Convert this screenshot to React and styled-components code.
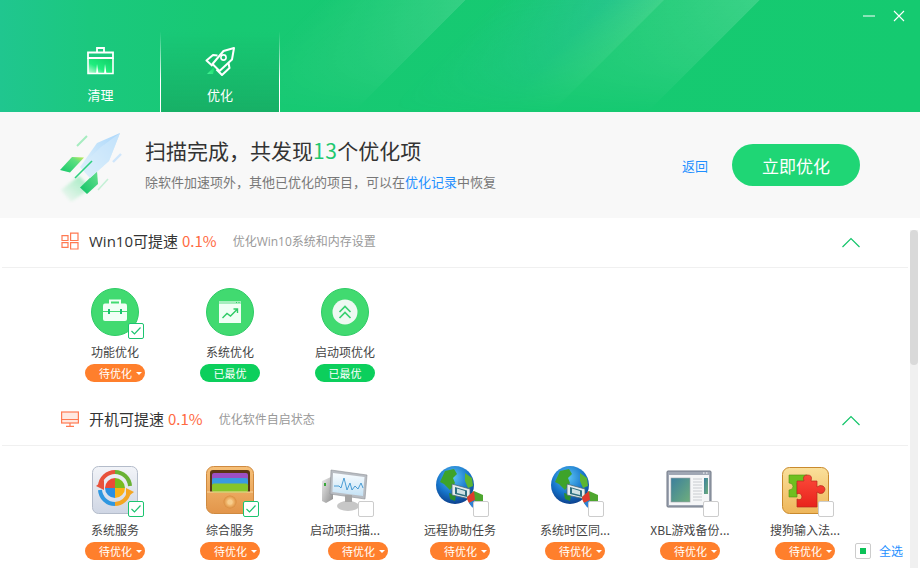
import React from 'react'
import styled, { createGlobalStyle } from 'styled-components'

const GlobalStyle = createGlobalStyle`
  html, body {
    margin: 0;
    padding: 0;
    background: #fff;
  }
  body {
    font-family: "Noto Sans CJK SC", "Noto Sans", sans-serif;
    color: #333;
  }
`

const Page = styled.div`
  width: 920px;
  height: 580px;
  overflow: hidden;
  background: #fff;
`

const Header = styled.header`
  position: relative;
  height: 112px;
  display: flex;
  flex-direction: column;
  background: linear-gradient(90deg, #20c68f 0, #1bc87e 90px, #17c973 220px, #15ca70 100%);

  &::before {
    content: '';
    position: absolute;
    inset: 0;
    background:
      linear-gradient(135deg, transparent 225px, rgba(255, 255, 255, 0.13) 329px, transparent 329.5px),
      linear-gradient(135deg, transparent 350px, rgba(70, 190, 190, 0.32) 430px, rgba(255, 255, 255, 0.18) 469px, rgba(255, 255, 255, 0.09) 470px, rgba(255, 255, 255, 0.16) 537px, transparent 537.5px);
    mask-image: linear-gradient(180deg, #000 0, rgba(0, 0, 0, 0.5) 60%, transparent 100%);
  }
`

const TitleBar = styled.div`
  position: relative;
  height: 32px;
  box-sizing: border-box;
  padding: 10px 15px 0 0;
  display: flex;
  justify-content: flex-end;
  gap: 18px;
`

const TabBar = styled.nav`
  position: relative;
  flex: 1;
  display: flex;
  padding-left: 41px;
`

const Tab = styled.div`
  width: 119px;
  box-sizing: border-box;
  padding-top: 14px;
  border-right: 1px solid;
  border-image: linear-gradient(180deg, rgba(255, 255, 255, 0), #fff 60%) 1;
  display: flex;
  flex-direction: column;
  align-items: center;
  color: #fff;
  background: ${p => (p.$active ? 'linear-gradient(180deg, rgba(23, 178, 102, 0) 0, #17b066 100%)' : 'none')};

  &:first-child {
    width: 120px;
  }
`

const TabLabel = styled.span`
  margin-top: 11px;
  font-size: 13px;
  line-height: 16px;
`

const Summary = styled.section`
  height: 106px;
  box-sizing: border-box;
  padding: 0 60px 0 55px;
  display: flex;
  align-items: center;
  background: #f8f8f8;
`

const SummaryText = styled.div`
  margin-left: 15px;
  margin-top: -3px;
`

const SummaryTitle = styled.h1`
  margin: 0;
  font-size: 21px;
  font-weight: 400;
  line-height: 28px;
  color: #333;
`

const Count = styled.span`
  color: #1fc870;
  letter-spacing: 0.5px;
`

const SummaryNote = styled.p`
  margin: 9px 0 0;
  font-size: 13px;
  line-height: 18px;
  color: #777;
`

const Link = styled.a`
  color: #1e8fff;
  font-size: ${p => p.$size || 13}px;
`

const BackLink = styled(Link)`
  margin-left: auto;
`

const PrimaryButton = styled.button`
  width: 128px;
  height: 42px;
  margin-left: 24px;
  border: 0;
  border-radius: 21px;
  background: #1fd675;
  color: #fff;
  font-family: inherit;
  font-size: 17px;
`

const Body = styled.div`
  position: relative;
  height: 350px;
  display: flex;
  overflow: hidden;
`

const Sections = styled.div`
  width: 908px;
  padding-left: 2px;
  box-sizing: border-box;
`

const SectionHead = styled.div`
  height: 50px;
  box-sizing: border-box;
  padding: 0 48px 3px 59px;
  display: flex;
  align-items: center;
  border-bottom: 1px solid #f0f0f0;
`

const SectionTitle = styled.h2`
  margin: -1px 0 0 10px;
  font-family: "Open Sans", "Noto Sans CJK SC", sans-serif;
  font-size: 15px;
  font-weight: 400;
  color: #333;
`

const Percent = styled.span`
  margin: -1px 0 0 4px;
  font-size: 15px;
  color: #ff6a42;
`

const SectionNote = styled.span`
  margin: -1px 0 0 16px;
  font-family: "Open Sans", "Noto Sans CJK SC", sans-serif;
  font-size: 12px;
  color: #999;
`

const Collapse = styled.svg`
  margin: 2px 0 0 auto;
`

const ItemRow = styled.div`
  display: flex;
  gap: 1px;
  padding: 20px 0 14px 56px;
`

const Item = styled.div`
  width: 114px;
  display: flex;
  flex-direction: column;
  align-items: center;
`

const IconWrap = styled.div`
  position: relative;
  width: 48px;
  height: 48px;

  svg {
    display: block;
  }
`

const Check = styled.span`
  position: absolute;
  right: -5px;
  bottom: -3px;
  width: 16px;
  height: 16px;
  box-sizing: border-box;
  border: 1px solid ${p => (p.$on ? '#1bc46f' : '#ccc')};
  border-radius: 2px;
  background: #fff;
  display: flex;
  align-items: center;
  justify-content: center;
`

const ItemLabel = styled.div`
  margin-top: 8px;
  max-width: 112px;
  white-space: nowrap;
  font-size: 12px;
  line-height: 16px;
  color: #444;
`

const Badge = styled.div`
  width: 60px;
  height: 18px;
  margin-top: 4px;
  margin-left: ${p => p.$nudge || 0}px;
  box-sizing: border-box;
  padding-left: ${p => (p.$done ? 0 : 14)}px;
  border-radius: 9px;
  display: flex;
  align-items: center;
  justify-content: ${p => (p.$done ? 'center' : 'flex-start')};
  background: ${p => (p.$done ? '#0ccf5c' : '#ff7f2c')};
  color: #fff;
  font-size: 11px;
  line-height: 18px;
`

const Caret = styled.i`
  margin-left: 4px;
  border-top: 3px solid #fff;
  border-left: 3px solid transparent;
  border-right: 3px solid transparent;
`

const Track = styled.div`
  width: 8px;
  height: 338px;
  margin: 12px 2px 0;
  background: #f0f0f0;
`

const Thumb = styled.div`
  height: 135px;
  border-radius: 4px;
  background: #d9d9d9;
`

const SelectAll = styled.div`
  position: absolute;
  right: 17px;
  bottom: 9px;
  display: flex;
  align-items: center;
  gap: 8px;
`

const SelectBox = styled.span`
  width: 16px;
  height: 16px;
  box-sizing: border-box;
  border: 1px solid #ccc;
  border-radius: 2px;
  background: #fff;
  display: flex;
  align-items: center;
  justify-content: center;

  &::after {
    content: '';
    width: 6px;
    height: 6px;
    background: #0cc258;
  }
`

const Tick = () => (
  <svg width="12" height="10" viewBox="0 0 12 10" fill="none">
    <path d="M1.5 5 L4.5 8 L10.5 1.5" stroke="#1bc46f" strokeWidth="1.2" />
  </svg>
)

const BroomIcon = () => (
  <svg width="29" height="30" viewBox="0 0 29 30" fill="none">
    <defs>
      <linearGradient id="broomFill" x1="0.9" y1="0" x2="0" y2="1">
        <stop offset="0" stopColor="#10cf68" />
        <stop offset="0.6" stopColor="#1fee7e" />
        <stop offset="1" stopColor="#c8fbdc" />
      </linearGradient>
    </defs>
    <path d="M2 12 H27 V27 H2 Z" fill="url(#broomFill)" />
    <path d="M11 6.5 V2 H18 V6.5 M2 6.5 H27 V12 H2 Z" stroke="#fff" strokeWidth="1.8" />
    <path d="M2 12 V27.5 H27 V12" stroke="#fff" strokeWidth="1.6" />
    <path d="M10 28 L11 18 L12.5 28 Z M18 28 L19 18 L20.5 28 Z" fill="#fff" />
  </svg>
)

const RocketIcon = () => (
  <svg width="30" height="30" viewBox="0 0 30 30" fill="none">
    <defs>
      <linearGradient id="flame" x1="1" y1="0" x2="0" y2="1">
        <stop offset="0" stopColor="#06d85c" />
        <stop offset="1" stopColor="#48f196" />
      </linearGradient>
    </defs>
    <path d="M2 28 L10 20 L8 28 Z" fill="url(#flame)" />
    <path d="M29 2 L27 13.5 L14.5 25 L7.5 18 L18.5 5 Z" stroke="#fff" strokeWidth="2" strokeLinejoin="round" />
    <path d="M12.5 9.5 L8 9 L1.5 14.5 L7.5 20 M23.5 17 L24.5 22 L17 29 L11.5 23.5" stroke="#fff" strokeWidth="2" strokeLinejoin="round" />
    <circle cx="18.5" cy="11.5" r="2.6" stroke="#fff" strokeWidth="1.6" />
  </svg>
)

const Minimize = () => (
  <svg width="12" height="12" viewBox="0 0 12 12">
    <path d="M0 6 H12" stroke="#fff" strokeWidth="1" />
  </svg>
)

const CloseIcon = () => (
  <svg width="12" height="12" viewBox="0 0 12 12">
    <path d="M1 1 L11 11 M11 1 L1 11" stroke="#fff" strokeWidth="1.1" />
  </svg>
)

const BigRocket = () => (
  <svg width="75" height="75" viewBox="0 0 75 75" fill="none">
    <defs>
      <linearGradient id="body" x1="1" y1="0" x2="0" y2="1">
        <stop offset="0" stopColor="#a9d6fb" />
        <stop offset="1" stopColor="#e6f4fb" />
      </linearGradient>
      <linearGradient id="finA" x1="0" y1="1" x2="1" y2="0">
        <stop offset="0" stopColor="#14c76a" />
        <stop offset="0.7" stopColor="#5fe07f" />
        <stop offset="1" stopColor="#c5ea55" />
      </linearGradient>
      <linearGradient id="finB" x1="0" y1="1" x2="1" y2="0">
        <stop offset="0" stopColor="#0fc266" />
        <stop offset="1" stopColor="#68e08e" />
      </linearGradient>
      <linearGradient id="trail" x1="1" y1="0" x2="0" y2="1">
        <stop offset="0" stopColor="#6fe3a0" stopOpacity="0.7" />
        <stop offset="1" stopColor="#6fe3a0" stopOpacity="0" />
      </linearGradient>
      <filter id="soft">
        <feGaussianBlur stdDeviation="1.8" />
      </filter>
    </defs>
    <path d="M24 48 L36 60 L16 74 L6 62 Z" fill="url(#trail)" filter="url(#soft)" />
    <path d="M5 42 L17 29 L29 29.5 L15 44.5 Z" fill="url(#finA)" />
    <path d="M25 59.5 L42 43 L43 56 L32 66 Z" fill="url(#finB)" />
    <path d="M65 5 L42 15 L25 39 L35 50 L54 33 Z" fill="url(#body)" />
    <path d="M65 5 L46 19 L25 39 L35 50 L54 33 Z" fill="#d5ebfb" opacity="0.55" />
    <path d="M20 50 L37 33" stroke="#2ed07f" strokeWidth="1.6" />
    <path d="M22 18 L32 8" stroke="#a6ecc0" strokeWidth="2" />
    <path d="M43 62 L53 51" stroke="#c5f0d6" strokeWidth="1.6" />
    <path d="M58 34 L66 26" stroke="#cfe6fb" strokeWidth="2.4" />
  </svg>
)

const WinOutline = () => (
  <svg width="18" height="18" viewBox="0 0 18 18" fill="none" stroke="#ff7a52" strokeWidth="1.2">
    <path d="M1 3.6 H7 V8.5 H1 Z M9.6 1.2 H17 V8.5 H9.6 Z M1 10.6 H7 V15.4 H1 Z M9.6 10.6 H17 V17 H9.6 Z" />
  </svg>
)

const MonitorOutline = () => (
  <svg width="18" height="18" viewBox="0 0 18 18" fill="none" stroke="#ff7a52" strokeWidth="1.2">
    <rect x="0.6" y="2" width="16.8" height="11" fill="#ffe9e1" />
    <path d="M1 9.5 H17 M9 13 V16 M5 16.4 H13" />
  </svg>
)

const UpChevron = () => (
  <Collapse width="18" height="11" viewBox="0 0 18 11" fill="none">
    <path d="M0.5 10 L9 1.5 L17.5 10" stroke="#14c56a" strokeWidth="1.2" />
  </Collapse>
)

const CircleBase = ({ children }) => (
  <svg width="48" height="48" viewBox="0 0 48 48" fill="none">
    <circle cx="24" cy="24" r="23.5" fill="#41da70" stroke="#2fcb66" strokeWidth="1" />
    {children}
  </svg>
)

const ToolboxIcon = () => (
  <CircleBase>
    <path d="M19 16 V12.5 H29 V16" stroke="#f0fff5" strokeWidth="2" />
    <rect x="12" y="15.5" width="24" height="17.5" rx="2" fill="#f0fff5" />
    <path d="M12 23.5 H36" stroke="#41da70" strokeWidth="1" />
    <path d="M18 21 V26 M30 21 V26" stroke="#1bc46f" strokeWidth="2" />
  </CircleBase>
)

const ChartIcon = () => (
  <CircleBase>
    <rect x="13" y="13" width="22" height="22" fill="#f0fff5" />
    <rect x="13" y="13" width="22" height="3" fill="#a6eebe" />
    <path d="M30 14.5 H31 M32.5 14.5 H33.5" stroke="#2fcb66" />
    <path d="M16.5 30 L21 25.5 L24.5 28 L31 21.5 M27.5 21 H31.5 V25" stroke="#2fcb66" strokeWidth="1.4" />
  </CircleBase>
)

const BoostIcon = () => (
  <CircleBase>
    <circle cx="24" cy="24" r="12.5" fill="#eef9f2" />
    <path d="M18.5 24 L24 18.5 L29.5 24 M18.5 30 L24 24.5 L29.5 30" stroke="#37d06f" strokeWidth="1.7" />
  </CircleBase>
)

const ServiceIcon = () => (
  <svg width="48" height="48" viewBox="0 0 48 48" fill="none">
    <defs>
      <linearGradient id="tile" x1="0" y1="0" x2="0" y2="1">
        <stop offset="0" stopColor="#f2f4f8" />
        <stop offset="1" stopColor="#cfd6e4" />
      </linearGradient>
    </defs>
    <rect x="1.5" y="0.5" width="45" height="47" rx="6" fill="url(#tile)" stroke="#b4bcca" />
    <path d="M9 20 A15 15 0 0 1 24 6" stroke="#e8523b" strokeWidth="4" />
    <path d="M24 6 A15 15 0 0 1 39 20" stroke="#69b234" strokeWidth="4" />
    <path d="M9 24 A15 15 0 0 0 24 38" stroke="#2f97e0" strokeWidth="4" />
    <path d="M24 38 A15 15 0 0 0 38 26" stroke="#f4a623" strokeWidth="4" />
    <path d="M5 20 L13 14 V24 Z" fill="#e8523b" />
    <path d="M43 26 L35 32 V22 Z" fill="#f4a623" />
    <path d="M24 22 V12 A10 10 0 0 0 14 22 Z" fill="#ec4a35" />
    <path d="M24 22 V12 A10 10 0 0 1 34 22 Z" fill="#78bb1e" />
    <path d="M24 22 V32 A10 10 0 0 1 14 22 Z" fill="#2a8fe0" />
    <path d="M24 22 V32 A10 10 0 0 0 34 22 Z" fill="#fbb117" />
  </svg>
)

const DrawerIcon = () => (
  <svg width="48" height="48" viewBox="0 0 48 48" fill="none">
    <defs>
      <linearGradient id="chest" x1="0" y1="0" x2="0" y2="1">
        <stop offset="0" stopColor="#f6c078" />
        <stop offset="1" stopColor="#e2954a" />
      </linearGradient>
      <radialGradient id="knob">
        <stop offset="0" stopColor="#fbd79a" />
        <stop offset="0.6" stopColor="#eeb267" />
        <stop offset="1" stopColor="#d98b3d" />
      </radialGradient>
    </defs>
    <rect x="0.5" y="0.5" width="47" height="47" rx="7" fill="url(#chest)" stroke="#cf8a40" />
    <path d="M4 26 V7 Q4 4 7 4 H41 Q44 4 44 7 V26 Z" fill="#5b3514" />
    <rect x="6" y="7" width="36" height="9" rx="2" fill="#9c4fc4" />
    <rect x="6" y="12" width="36" height="8" rx="2" fill="#3a9be0" />
    <rect x="6" y="17.5" width="36" height="9" rx="2" fill="#86c52a" />
    <path d="M1 26 H47" stroke="#f9d79d" strokeWidth="1" />
    <circle cx="24" cy="36" r="6.5" fill="url(#knob)" />
    <circle cx="24" cy="36" r="2.6" fill="#f7cd8c" />
  </svg>
)

const PcIcon = () => (
  <svg width="48" height="48" viewBox="0 0 48 48" fill="none">
    <defs>
      <linearGradient id="case" x1="0" y1="0" x2="1" y2="1">
        <stop offset="0" stopColor="#eee" />
        <stop offset="1" stopColor="#8d8d8d" />
      </linearGradient>
      <linearGradient id="screen" x1="0" y1="0" x2="0" y2="1">
        <stop offset="0" stopColor="#f8fcff" />
        <stop offset="1" stopColor="#c5e2f5" />
      </linearGradient>
    </defs>
    <path d="M1 15 L12 10 V33 L5 37 L1 35 Z" fill="url(#case)" />
    <rect x="3" y="17" width="2" height="3" fill="#3aa83a" />
    <path d="M10 4 L46 9 L44 33 L9 28 Z" fill="#b8bcc2" stroke="#8d9096" strokeWidth="0.6" />
    <path d="M12 7 L43.5 11 L42 30 L11.5 26 Z" fill="url(#screen)" />
    <path d="M13 20 L18 20 L20 22 L23 12 L26 24 L29 17 L31 24 L34 20 L37 23 L40 17 L42 22" stroke="#3a93cf" strokeWidth="0.9" />
    <ellipse cx="27" cy="40" rx="11" ry="5" fill="#c7c7c7" />
    <path d="M24 29 H31 V36 H24 Z" fill="#a5a5a5" />
  </svg>
)

const GlobeIcon = ({ id }) => (
  <svg width="48" height="48" viewBox="0 0 48 48" fill="none">
    <defs>
      <radialGradient id={id} cx="0.45" cy="0.3" r="0.8">
        <stop offset="0" stopColor="#5bc3f5" />
        <stop offset="0.55" stopColor="#1573c9" />
        <stop offset="1" stopColor="#0a2f78" />
      </radialGradient>
    </defs>
    <circle cx="19" cy="19" r="19" fill={`url(#${id})`} />
    <path d="M9 5 L18 3 L21 8 L17 12 L19 17 L14 24 L8 18 L4 16 Z" fill="#3ea32a" />
    <path d="M29 7 L36 12 L37 20 L32 22 L29 15 Z" fill="#5cb531" />
    <path d="M13 27 L20 29 L19 35 L14 33 Z" fill="#2c8f2b" />
    <path d="M16 18 L34 23 V33 L16 29 Z" fill="#e6ecee" stroke="#4d6a74" strokeWidth="0.8" />
    <path d="M19 21 L31 24.5 V31 L19 28 Z" fill="#2f6f80" />
    <path d="M21 22.5 L29 25 V29 L21 27 Z" fill="#cfe0e3" />
    <path d="M31 31 L38 25 L47 29 V36 L39 43 Q32 38 31 31 Z" fill="#4ea62f" />
    <path d="M31 31 L38 25 L39 34 L33 37 Q31 34 31 31 Z" fill="#e03a2e" />
    <path d="M33 37 L39 34 V43 Q35 41 33 37 Z" fill="#2f7fd8" />
  </svg>
)

const WindowIcon = () => (
  <svg width="48" height="48" viewBox="0 0 48 48" fill="none">
    <defs>
      <linearGradient id="pane" x1="0" y1="0" x2="1" y2="1">
        <stop offset="0" stopColor="#3b7f9d" />
        <stop offset="1" stopColor="#6fae7c" />
      </linearGradient>
    </defs>
    <rect x="1" y="5" width="44" height="36" rx="1" fill="#a0a7b4" stroke="#6f7684" />
    <rect x="3" y="9" width="40" height="30" fill="#f5f6f7" />
    <path d="M37 7 H38.5 M40 7 H41.5" stroke="#fff" />
    <rect x="5" y="12" width="19" height="24" fill="url(#pane)" stroke="#99a0a8" strokeWidth="0.6" />
    <path d="M27 13 H36 M27 16 H36 M27 19 H36 M27 22 H36 M27 25 H36 M27 28 H36 M27 31 H36 M27 34 H36" stroke="#c9ccd0" />
    <rect x="38" y="12" width="4" height="16" fill="url(#pane)" />
  </svg>
)

const PuzzleIcon = () => (
  <svg width="48" height="48" viewBox="0 0 48 48" fill="none">
    <defs>
      <linearGradient id="puzzleTile" x1="0" y1="0" x2="0" y2="1">
        <stop offset="0" stopColor="#fae09b" />
        <stop offset="1" stopColor="#eeb65a" />
      </linearGradient>
      <linearGradient id="red" x1="0" y1="0" x2="0" y2="1">
        <stop offset="0" stopColor="#fb4a3a" />
        <stop offset="1" stopColor="#e8231c" />
      </linearGradient>
    </defs>
    <rect x="1.5" y="1.5" width="46" height="46" rx="7" fill="url(#puzzleTile)" stroke="#c98a2e" />
    <path d="M8 9 H26 V17 H16 V31 H8 V24 Q12 24 12 20.5 Q12 17 8 17 Z" fill="#6fbf1f" stroke="#4a9412" strokeWidth="0.6" />
    <path d="M16 15 H23 Q21 9 26.5 9 Q32 9 30 15 H36 V21 Q39 18.5 42 20 Q46 23 42 27 Q39 28.5 36 26 V41 H16 V33 Q20 35 21 31 Q20 26 16 28 Z" fill="url(#red)" stroke="#b8291c" strokeWidth="0.7" />
  </svg>
)

const sections = [
  {
    title: 'Win10可提速',
    note: '优化Win10系统和内存设置',
    icon: <WinOutline />,
    items: [
      { label: '功能优化', icon: <ToolboxIcon />, checked: true },
      { label: '系统优化', icon: <ChartIcon />, done: true },
      { label: '启动项优化', icon: <BoostIcon />, done: true },
    ],
  },
  {
    title: '开机可提速',
    note: '优化软件自启状态',
    icon: <MonitorOutline />,
    items: [
      { label: '系统服务', icon: <ServiceIcon />, checked: true },
      { label: '综合服务', icon: <DrawerIcon />, checked: true },
      { label: '启动项扫描...', icon: <PcIcon />, box: true, nudge: 26 },
      { label: '远程协助任务', icon: <GlobeIcon id="globeA" />, box: true },
      { label: '系统时区同...', icon: <GlobeIcon id="globeB" />, box: true },
      { label: 'XBL游戏备份...', icon: <WindowIcon />, box: true },
      { label: '搜狗输入法...', icon: <PuzzleIcon />, box: true },
    ],
  },
]

export default function App() {
  return (
    <Page>
      <GlobalStyle />
      <Header>
        <TitleBar>
          <Minimize />
          <CloseIcon />
        </TitleBar>
        <TabBar>
          <Tab>
            <BroomIcon />
            <TabLabel>清理</TabLabel>
          </Tab>
          <Tab $active>
            <RocketIcon />
            <TabLabel>优化</TabLabel>
          </Tab>
        </TabBar>
      </Header>

      <Summary>
        <BigRocket />
        <SummaryText>
          <SummaryTitle>
            扫描完成，共发现<Count>13</Count>个优化项
          </SummaryTitle>
          <SummaryNote>
            除软件加速项外，其他已优化的项目，可以在<Link>优化记录</Link>中恢复
          </SummaryNote>
        </SummaryText>
        <BackLink>返回</BackLink>
        <PrimaryButton>立即优化</PrimaryButton>
      </Summary>

      <Body>
        <Sections>
          {sections.map(section => (
            <section key={section.title}>
              <SectionHead>
                {section.icon}
                <SectionTitle>{section.title}</SectionTitle>
                <Percent>0.1%</Percent>
                <SectionNote>{section.note}</SectionNote>
                <UpChevron />
              </SectionHead>
              <ItemRow>
                {section.items.map(item => (
                  <Item key={item.label}>
                    <IconWrap>
                      {item.icon}
                      {(item.checked || item.box) && (
                        <Check $on={item.checked}>{item.checked && <Tick />}</Check>
                      )}
                    </IconWrap>
                    <ItemLabel>{item.label}</ItemLabel>
                    {item.done ? (
                      <Badge $done>已最优</Badge>
                    ) : (
                      <Badge $nudge={item.nudge}>
                        待优化
                        <Caret />
                      </Badge>
                    )}
                  </Item>
                ))}
              </ItemRow>
            </section>
          ))}
        </Sections>
        <Track>
          <Thumb />
        </Track>
        <SelectAll>
          <SelectBox />
          <Link $size={12}>全选</Link>
        </SelectAll>
      </Body>
    </Page>
  )
}
